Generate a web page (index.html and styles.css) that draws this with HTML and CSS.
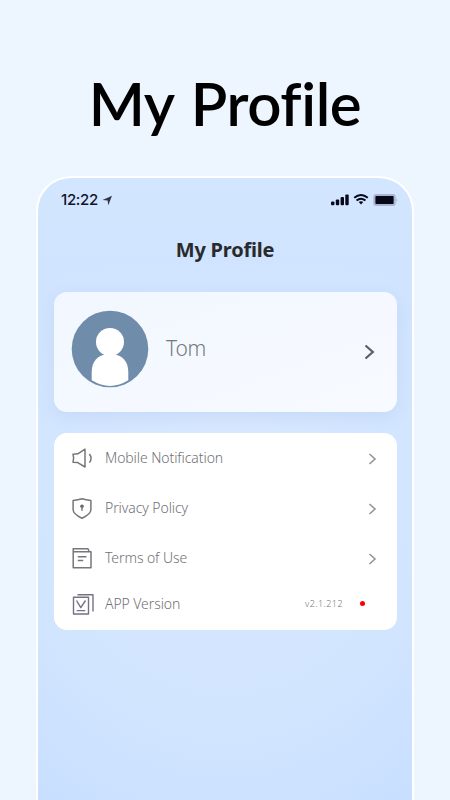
FILE: index.html
```html
<!DOCTYPE html>
<html lang="en">
<head>
<meta charset="utf-8">
<title>My Profile</title>
<link rel="stylesheet" href="styles.css">
</head>
<body>
<h1 class="headline">My Profile</h1>
<main class="phone">
  <div class="status">
    <span class="time">12:22</span>
    <svg class="locate" width="11" height="11" viewBox="0 0 11 11"><path d="M.5 5 10 .8 6.3 10.3 5.6 5.6z" fill="#343648"/></svg>
    <svg class="signals" width="67" height="14" viewBox="0 0 67 14">
      <g fill="#07071a"><rect x="0" y="8.5" width="3.4" height="3.8" rx="1"/><rect x="4.8" y="6.5" width="3.4" height="5.8" rx="1"/><rect x="9.6" y="4" width="3.4" height="8.3" rx="1"/><rect x="14.3" y="1.5" width="3.4" height="10.8" rx="1"/><path d="M27.7 9 30 11.6 32.3 9Q30 7.5 27.7 9z"/></g>
      <path d="M23.2 4.8Q30-.8 36.8 4.8M25.5 7.6Q30 3.8 34.5 7.6" fill="none" stroke="#07071a" stroke-width="1.9"/>
      <rect x="42.3" y="1" width="22.4" height="12" rx="3" fill="#a9b4ce"/><rect x="44.4" y="3.1" width="18.2" height="7.8" rx="1" fill="#07071a"/><path d="M65.3 5Q67.5 7 65.3 9z" fill="#a9b4ce"/>
    </svg>
  </div>
  <h2 class="title">My Profile</h2>
  <section class="card user">
    <svg class="avatar" width="78" height="78" viewBox="0 0 78 78">
      <circle cx="39" cy="39" r="38.3" fill="#708cab"/>
      <circle cx="39" cy="32" r="14" fill="#fff"/>
      <path d="M20.7 70.3V62C20.7 51 27 45.5 35 44.5H43C51 45.5 57.3 51 57.3 62V70.3Q39 81.5 20.7 70.3z" fill="#fff"/>
    </svg>
    <span class="name">Tom</span>
    <svg class="go" width="12" height="18" viewBox="0 0 12 18"><path d="m1.5 2.5 7.3 6.5-7.3 6.5" fill="none" stroke="#5d6064" stroke-width="2.3"/></svg>
  </section>
  <section class="card menu">
    <div class="row">
      <svg class="icon" width="24" height="24" viewBox="0 0 24 24"><path d="M2 8.2 6.8 7.8 14 3.2V21L6.8 16.6 2 16.2Q3.4 12.4 2 8.2zM18.4 8Q21.8 12.2 18.4 16.6" /></svg>
      <span class="label">Mobile Notification</span>
      <svg class="chev" width="9" height="14" viewBox="0 0 9 14"><path d="m1.5 2 5.5 5-5.5 5"/></svg>
    </div>
    <div class="row">
      <svg class="icon" width="24" height="24" viewBox="0 0 24 24"><path d="M11 2.7Q15 3.8 19.9 4.6V13.5C19.9 18 14 20.8 11 22.2 8 20.8 2.1 18 2.1 13.5V4.6Q7 3.8 11 2.7z"/><circle cx="11" cy="10.3" r="1.8" fill="#66666a" stroke="none"/><path d="M11 10v4.8"/></svg>
      <span class="label">Privacy Policy</span>
      <svg class="chev" width="9" height="14" viewBox="0 0 9 14"><path d="m1.5 2 5.5 5-5.5 5"/></svg>
    </div>
    <div class="row">
      <svg class="icon" width="24" height="24" viewBox="0 0 24 24"><path d="M2.2 5.8H20V21.8H2.2zM2.2 5.8V2.8H17L18.2 5.8M6.8 10.8H15.5M6.8 14.5H12.2"/></svg>
      <span class="label">Terms of Use</span>
      <svg class="chev" width="9" height="14" viewBox="0 0 9 14"><path d="m1.5 2 5.5 5-5.5 5"/></svg>
    </div>
    <div class="row last">
      <svg class="icon violet" width="24" height="24" viewBox="0 0 24 24"><path d="M2.5 5.2H17.5V22H2.5zM6.5 2.8H22V19.5M5.5 8.5 9.8 15.7 14.5 8.5M5.7 18.6H14.3"/></svg>
      <span class="label">APP Version</span>
      <span class="version">v2.1.212</span>
      <span class="dot"></span>
    </div>
  </section>
</main>
</body>
</html>
```
FILE: styles.css
```css
* { box-sizing: border-box; }
body {
  margin: 0;
  height: 800px;
  display: flex;
  flex-direction: column;
  align-items: center;
  background: #edf5ff;
  font-family: "Noto Sans", sans-serif;
}
.headline {
  margin: 0;
  height: 176px;
  padding-top: 67px;
  flex: none;
  font: 600 60px/72px Lato, sans-serif;
  letter-spacing: -0.4px;
  word-spacing: 3px;
  font-variant-ligatures: none;
  white-space: nowrap;
  color: #000;
}
.phone {
  width: 378px;
  height: 624px;
  flex: none;
  padding: 0 16px;
  border: 2px solid #fff;
  border-bottom: 0;
  border-radius: 35px 35px 0 0;
  background:
    linear-gradient(#d2e6ff, #d0e4ff 80px, rgba(208, 228, 255, 0) 210px),
    radial-gradient(ellipse 350px 420px at 50% 290px, #d8e8ff 0%, #d2e5ff 60%, #c6deff 100%);
}
.status {
  display: flex;
  align-items: center;
  height: 44px;
  padding-left: 7px;
}
.time {
  font: 500 15px/20px Inter, sans-serif;
  letter-spacing: -0.3px;
  color: #12142a;
}
.locate { margin: 1px 0 0 4px; }
.signals { margin: 0 -2px 0 auto; }
.title {
  margin: 15px 0 30px;
  font: 700 20px/25px "Noto Sans", sans-serif;
  letter-spacing: -0.2px;
  text-align: center;
  color: #292a2b;
}
.card {
  width: 343px;
  border-radius: 13px;
}
.user {
  display: flex;
  height: 120px;
  padding: 0 21px 0 17px;
  background: linear-gradient(160deg, #f2f7ff, #f7faff);
  box-shadow: 0 5px 16px rgba(140, 170, 210, .2);
}
.avatar { margin-top: 18px; }
.name {
  margin: 41px 0 0 17px;
  font: 300 21px/30px "Noto Sans", sans-serif;
  letter-spacing: -0.3px;
  color: #77797d;
}
.go { margin: 51px 0 0 auto; }
.menu {
  height: 197px;
  margin-top: 21px;
  padding: 0 20px 0 17px;
  background: #fff;
}
.row {
  display: flex;
  align-items: center;
  height: 50px;
}
.row.last { height: 42px; }
.icon {
  fill: none;
  stroke: #77777b;
  stroke-width: 1.5;
  stroke-linejoin: round;
}
.violet { stroke: #747287; stroke-width: 1.4; }
.label {
  margin: -2px 0 0 10px;
  font-size: 14px;
  font-weight: 300;
  letter-spacing: -0.08px;
  color: #707175;
}
.chev {
  margin: 1px 0 0 auto;
  fill: none;
  stroke: #939597;
  stroke-width: 1.6;
}
.version {
  margin: -2px 0 0 auto;
  font-size: 9px;
  font-weight: 300;
  letter-spacing: 0.45px;
  color: #77797c;
}
.dot {
  width: 5px;
  height: 5px;
  margin: -1px 12px 0 17px;
  border-radius: 50%;
  background: #f00;
}
```
